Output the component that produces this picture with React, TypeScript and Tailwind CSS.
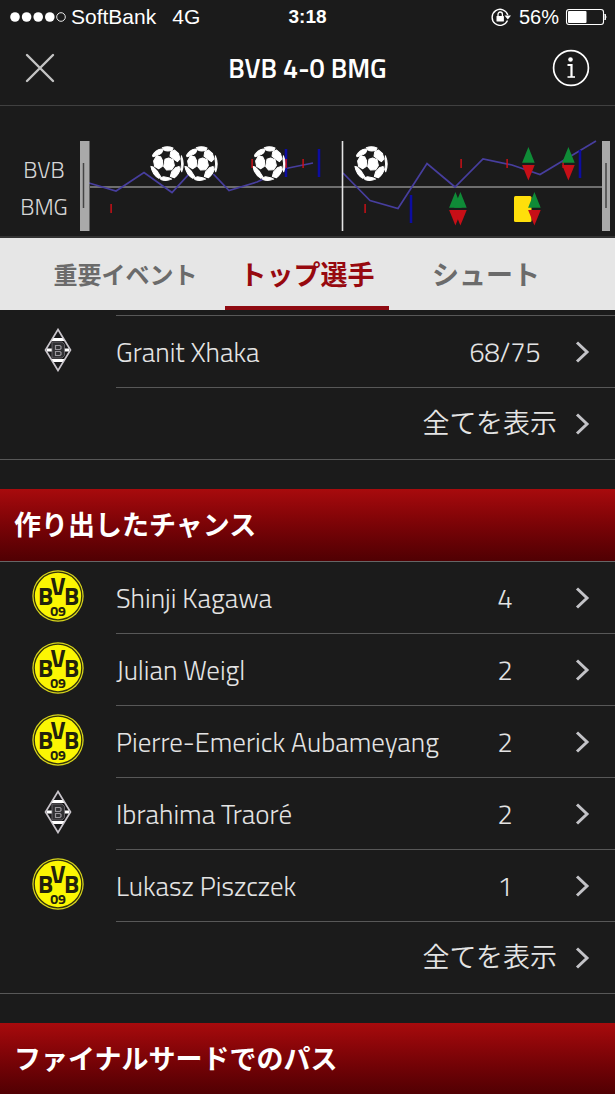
import React, { useState } from 'react'

type Team = 'bvb' | 'bmg'

interface Player {
  name: string
  team: Team
  value: string
}

const passes: Player[] = [{ name: 'Granit Xhaka', team: 'bmg', value: '68/75' }]

const chances: Player[] = [
  { name: 'Shinji Kagawa', team: 'bvb', value: '4' },
  { name: 'Julian Weigl', team: 'bvb', value: '2' },
  { name: 'Pierre-Emerick Aubameyang', team: 'bvb', value: '2' },
  { name: 'Ibrahima Traoré', team: 'bmg', value: '2' },
  { name: 'Lukasz Piszczek', team: 'bvb', value: '1' },
]

const tabs = [
  { id: 'events', label: '重要イベント', className: 'w-[203px] pl-1 text-[24px]' },
  { id: 'players', label: 'トップ選手', className: 'w-[164px] text-[27px]' },
  { id: 'shots', label: 'シュート', className: 'w-[194px] text-[27px]' },
]

// timeline markers: [x, top, height]
const redTicks = [[111, 204, 9], [252, 159, 9], [286, 159, 9], [303, 159, 9], [365, 204, 9], [461, 159, 9], [507, 159, 9], [563, 162, 6]]
const blueTicks = [[286, 149, 28], [319, 149, 28], [411, 195, 28], [580, 150, 28]]
const goals = [167, 201, 269, 371]
const subs = [[528, 164], [568, 164], [455, 209], [460, 209], [534, 209]]

export default function App() {
  const [tab, setTab] = useState('players')

  return (
    <div className="flex h-screen flex-col overflow-hidden bg-[#1b1b1b] text-[#e4e4e4] font-['Titillium_Web','Roboto','Noto_Sans_CJK_JP',sans-serif]">
      <StatusBar />

      <header className="grid h-[72px] shrink-0 grid-cols-[80px_1fr_80px] items-center border-b border-[#404040] pb-[3px]">
        <button aria-label="閉じる" className="flex justify-center">
          <svg viewBox="0 0 30 30" className="size-[30px]" stroke="#c4c4c4" strokeWidth="2.4" strokeLinecap="round">
            <path d="M2 2L28 28M28 2L2 28" />
          </svg>
        </button>
        <h1 className="text-center text-[27px] font-semibold text-white">BVB 4-0 BMG</h1>
        <button aria-label="情報" className="flex justify-end pr-6">
          <svg viewBox="0 0 40 40" className="size-10" fill="none" stroke="#fff">
            <circle cx="20" cy="20" r="17.4" strokeWidth="1.7" />
            <circle cx="19.5" cy="11.5" r="2.3" fill="#fff" stroke="none" />
            <path d="M16.5 17H20.5V29" strokeWidth="2.2" />
            <path d="M16.5 29H24" strokeWidth="1.6" />
          </svg>
        </button>
      </header>

      {/* 試合の流れ */}
      <section className="flex shrink-0 items-start border-b-2 border-[#333]">
        <div className="flex w-20 flex-col pt-[45px] pl-5 text-[23px] leading-[37px] font-light text-[#d6d6d6]">
          <span className="w-12 text-center">BVB</span>
          <span className="w-12 text-center">BMG</span>
        </div>
        <Timeline />
      </section>

      <nav className="flex h-[72px] shrink-0 justify-start bg-[#e6e6e6] pl-[22px]">
        {tabs.map((t) => (
          <button
            key={t.id}
            onClick={() => setTab(t.id)}
            className={`border-b-4 pt-[6px] font-bold whitespace-nowrap ${t.className} ${
              tab === t.id ? 'border-[#8f0b12] text-[#97090f]' : 'border-transparent text-[#6b6b6b]'
            }`}
          >
            {t.label}
          </button>
        ))}
      </nav>

      <main className="min-h-0 flex-1 overflow-y-auto pt-[5px] [scrollbar-width:none]">
        <div className="ml-[116px] border-t border-[#585858]" />
        <PlayerList players={passes} />
        <SectionTitle>作り出したチャンス</SectionTitle>
        <PlayerList players={chances} />
        <SectionTitle>ファイナルサードでのパス</SectionTitle>
      </main>
    </div>
  )
}

function StatusBar() {
  return (
    <div className="grid h-[34px] shrink-0 grid-cols-[1fr_auto_1fr] items-center px-[10px] font-['Liberation_Sans',Arial,sans-serif] text-[20px] text-white">
      <div className="flex items-center text-[21px]">
        <svg viewBox="0 0 57 12" className="mr-1 h-3 w-[57px]" fill="#fff">
          {[5, 16.6, 28.2, 39.8].map((x) => (
            <circle key={x} cx={x} cy="6" r="4.8" />
          ))}
          <circle cx="51" cy="6" r="4.3" fill="none" stroke="#fff" strokeWidth="0.9" />
        </svg>
        <span>SoftBank</span>
        <span className="ml-4">4G</span>
      </div>
      <span className="text-[19px] font-bold">3:18</span>
      <div className="flex items-center justify-end">
        <svg viewBox="0 0 20 18" className="mr-2 h-[18px] w-5" fill="none" stroke="#fff">
          <path d="M16.5 12.5A8 8 0 1 1 16.8 7" strokeWidth="1.4" />
          <path d="M13.5 7.5H20L16.8 11.5Z" fill="#fff" stroke="none" />
          <rect x="5.5" y="8" width="7.4" height="5.6" rx="0.6" fill="#fff" stroke="none" />
          <path d="M7 8.5V6.2A2.2 2.2 0 0 1 11.4 6.2V8.5" strokeWidth="1.3" />
        </svg>
        <span>56%</span>
        <svg viewBox="0 0 42 18" className="-mr-[2px] ml-[6px] h-[18px] w-[42px]">
          <rect x="1.5" y="1.5" width="37" height="15" rx="2.5" fill="none" stroke="#fff" strokeWidth="1.1" />
          <rect x="3" y="3" width="18.5" height="12" rx="1" fill="#fff" />
          <path d="M40 6Q42 9 40 12Z" fill="#fff" stroke="#fff" />
        </svg>
      </div>
    </div>
  )
}

function Timeline() {
  return (
    <svg viewBox="80 106 535 130" className="min-w-0 flex-1">
      <path d="M90 187H602" stroke="#6e6e6e" strokeWidth="1.8" />
      <g fill="none" stroke="#473e9e" strokeWidth="1.7">
        <path d="M89 183L116 191L144 172.500L172 192.500L201 161L229 190.500L257 182L286 168.500L313 163" />
        <path d="M343 173L370 200.500L398 208.500L427 163.500L455 187L483 159L512 165L540 174.500L596 141" />
      </g>
      <path d="M342.500 141V231" stroke="#e4e4e4" strokeWidth="1.6" />

      {blueTicks.map(([x, y, h]) => (
        <rect key={x} x={x - 1.3} y={y} width="2.6" height={h} fill="#0d0da0" />
      ))}
      {goals.map((x) => (
        <Ball key={x} x={x} y={163.7} />
      ))}
      {redTicks.map(([x, y, h]) => (
        <rect key={x} x={x - 0.6} y={y} width="1.4" height={h} fill="#d40f17" />
      ))}
      <rect x="514" y="196" width="17.500" height="26" rx="1.500" fill="#ffdf0b" />
      {subs.map(([x, y]) => (
        <g key={x}>
          <path d={`M${x + 0.4} ${y - 17}l6.300 15.700h-12.600z`} fill="#0f8b37" />
          <path d={`M${x + 0.4} ${y + 16.5}l6.300 -15.500h-12.600z`} fill="#c70f17" />
        </g>
      ))}

      {/* 範囲ハンドル */}
      <rect x="80" y="141" width="9.500" height="90" fill="#a9a9a9" />
      <path d="M83.500 163V208" stroke="#444" strokeWidth="1.5" />
      <rect x="602" y="141" width="8" height="90" fill="#a9a9a9" />
      <path d="M606 163V208" stroke="#555" strokeWidth="1.8" />
    </svg>
  )
}

function Ball({ x, y }: { x: number; y: number }) {
  return (
    <g transform={`translate(${x} ${y}) scale(0.335)`}>
      <circle r="48" fill="#1b1b1b" />
      <g fill="#fff" stroke="#fff" strokeWidth="3" strokeLinejoin="round">
        <path d="M-6 -13L5 -17L18 -12L22 5L14 18L-1 19L-10 8Z" />
        <path d="M-32 -22L-19 -21L-13 -9L-14 8L-25 15L-37 8L-40 -8Z" />
        <path d="M-43 -25Q-35 -41 -17 -44L-12 -41Q-14 -32 -22 -28Q-31 -23 -42 -21Z" />
        <path d="M-14 -48Q2 -53 18 -47L15 -40Q0 -36 -9 -41Z" />
        <path d="M11 -35L22 -41L34 -31L39 -14L31 -6L22 -12L9 -23Z" />
        <path d="M43 -24Q53 0 44 24L41 17Q46 2 42 -12Z" />
        <path d="M14 24L25 12L36 8L39 17Q35 33 22 42L10 38Z" />
        <path d="M-48 8Q-44 32 -24 44L-19 38L-30 21L-41 10Z" />
        <path d="M-20 42L-10 39L8 43L14 46Q-4 54 -18 47Z" />
      </g>
    </g>
  )
}

function SectionTitle({ children }: { children: React.ReactNode }) {
  return (
    <h2 className="mt-[29px] flex h-[73px] items-center border-b border-[#666] bg-linear-to-b from-[#a80b0d] to-[#500003] px-[14px] text-[27px] font-bold text-white">
      {children}
    </h2>
  )
}

function PlayerList({ players }: { players: Player[] }) {
  return (
    <ul>
      {players.map((p) => (
        <li key={p.name}>
          <button className="flex h-18 w-full items-center text-left">
            <span className="flex w-[116px] shrink-0 justify-center pb-1">{p.team === 'bvb' ? <BvbCrest /> : <BmgCrest />}</span>
            <span className="flex h-full min-w-0 flex-1 items-center border-b border-[#585858] pr-6 font-light">
              <span className="flex-1 pt-[2px] text-[27px] whitespace-nowrap">{p.name}</span>
              <span className="w-20 shrink-0 pt-[2px] text-center text-[27px]">{p.value}</span>
              <Chevron />
            </span>
          </button>
        </li>
      ))}
      <li>
        <button className="flex h-18 w-full items-center justify-end border-b border-[#585858] pr-6 text-[27px] font-[350]">
          <span>全てを表示</span>
          <Chevron small />
        </button>
      </li>
    </ul>
  )
}

function Chevron({ small }: { small?: boolean }) {
  return (
    <svg viewBox="0 0 16 24" className={`h-6 w-4 shrink-0 ${small ? 'ml-[18px]' : 'ml-[30px]'}`} fill="none" stroke="#c3c3c7" strokeWidth="3">
      <path d="M2 2.500L12 12L2 21.500" />
    </svg>
  )
}

function BvbCrest() {
  return (
    <svg viewBox="0 0 52 52" className="size-[52px] overflow-visible font-['Titillium_Web',sans-serif]" fontWeight="700" textAnchor="middle" fill="#22220c">
      <circle cx="26" cy="26" r="25.700" fill="#d8d51c" />
      <circle cx="26" cy="26" r="23.800" fill="#fbf603" stroke="#33330c" strokeWidth="1.3" />
      <text x="13.500" y="35" fontSize="25">B</text>
      <text x="26" y="24.500" fontSize="25">V</text>
      <text x="39.500" y="35" fontSize="25">B</text>
      <text x="26" y="46" fontSize="14">09</text>
    </svg>
  )
}

function BmgCrest() {
  return (
    <svg viewBox="0 0 28 44" className="h-11 w-7">
      <path d="M14 1.500L26.500 22L14 42.500L1.500 22Z" fill="#19191b" stroke="#c8c4ca" strokeWidth="1.7" />
      <path d="M9.500 10H18.500L20.500 13H7.500ZM7.500 31H20.500L18.500 34H9.500ZM3 20.500H8V23.500H3ZM20 20.500H25V23.500H20Z" fill="#fff" />
      <path d="M8 14H18L20.500 16.500V27.500L18 30H8Z" fill="#303033" stroke="#737077" strokeWidth="0.8" />
      <path d="M11.500 17.500H16L17 18.500V20.500L16 21.500H11.500ZM11.500 23.500H16L17 24.500V26.500L16 27.500H11.500Z" fill="none" stroke="#99969c" strokeWidth="1.2" />
    </svg>
  )
}
